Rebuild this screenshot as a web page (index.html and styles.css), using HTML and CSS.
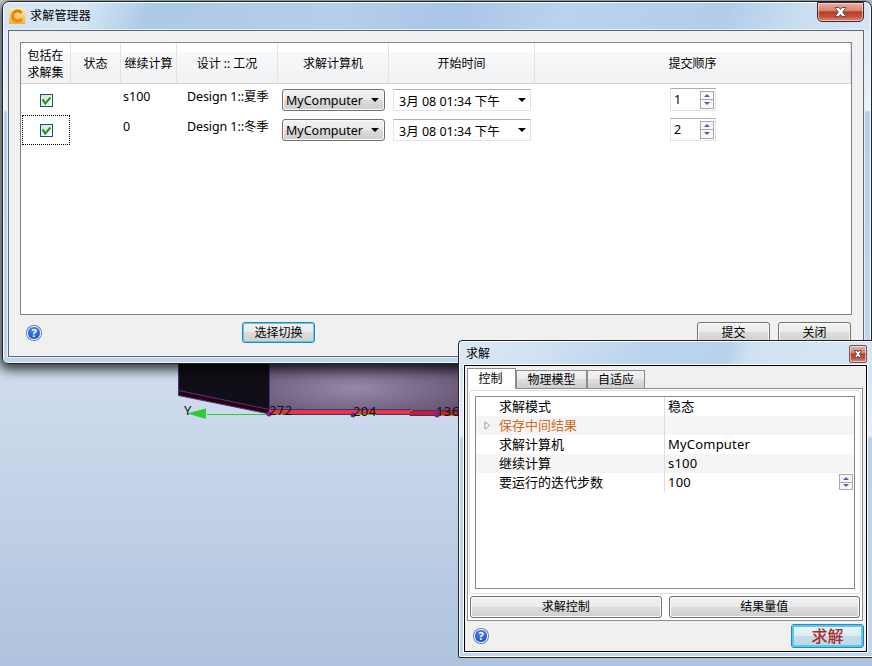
FILE: index.html
```html
<!DOCTYPE html>
<html lang="zh">
<head>
    <meta charset="UTF-8">
    <title>求解管理器</title>
    <link rel="stylesheet" href="styles.css">
</head>
<body>
    <svg class="scene" width="294" height="70" viewBox="178 356 294 70">
        <defs>
            <radialGradient id="wall" cx="0.42" cy="0.6" r="0.65">
                <stop offset="0" stop-color="#9787a8"/>
                <stop offset="1" stop-color="#625270"/>
            </radialGradient>
        </defs>
        <rect x="269" y="356" width="203" height="54" fill="url(#wall)"/>
        <path d="M178.500 356H269.500V410L178.500 390.500Z" fill="#120e17" stroke="#45358c"/>
        <path d="M178.500 390.500L269.500 409.500V414L178.500 395.500Z" fill="#310006" stroke="#45358c"/>
        <path d="M269 409.500H411V414H269Z" fill="#e8383f"/>
        <path d="M410 411H472V415H410Z" fill="#cb1f27"/>
        <path d="M269 409.500H411L412 410.500H472M269 414.500H410V415.500H472" fill="none" stroke="#3b3088"/>
        <path d="M207 414.500H269M274 414.500H283M355 414.500H376M440 415.500H456" stroke="#2ecc33"/>
        <path d="M187 413.500L206 408.500V419Z" fill="#2ecc33"/>
        <g fill="#7c1cac">
            <circle cx="269" cy="414" r="2.500"/>
            <circle cx="353" cy="415" r="2.500"/>
            <circle cx="437" cy="415" r="2.500"/>
        </g>
        <g class="axis-text">
            <text x="184" y="415">Y</text>
            <text x="269" y="415">272</text>
            <text x="353" y="416">204</text>
            <text x="436" y="416">136</text>
        </g>
    </svg>

    <div class="window manager">
        <div class="titlebar">
            <svg class="app-icon" width="16" height="16" viewBox="0 0 16 16">
                <defs>
                    <linearGradient id="gold" x2="0" y2="1">
                        <stop offset="0" stop-color="#ffe9b0"/>
                        <stop offset="1" stop-color="#f2ad35"/>
                    </linearGradient>
                </defs>
                <rect width="16" height="16" fill="url(#gold)"/>
                <path d="M12.500 5A5 5 0 1 0 12.500 11" fill="none" stroke="#e58a0c" stroke-width="3"/>
                <path d="M12 3.500A6 6 0 0 0 3.500 5" fill="none" stroke="#b97614"/>
            </svg>
            <span class="title">求解管理器</span>
            <button class="close"><svg width="13" height="10" viewBox="0 0 13 10"><path d="M1 .5H5L6.500 2.500L8 .5H12L8.700 5L12 9.500H8L6.500 7.500L5 9.500H1L4.300 5Z" fill="#fff" stroke="#535666"/></svg></button>
        </div>
        <div class="client">
            <div class="list">
                <div class="row head">
                    <div>包括在<br>求解集</div>
                    <div>状态</div>
                    <div>继续计算</div>
                    <div>设计 :: 工况</div>
                    <div>求解计算机</div>
                    <div>开始时间</div>
                    <div>提交顺序</div>
                </div>
                <div class="row item">
                    <div class="check-cell"><span class="check"><svg width="9" height="9" viewBox="0 0 9 9"><path d="M.5 3.500L3.300 7.500L8.500 1.500" fill="none" stroke="#1f9c22" stroke-width="2.200"/></svg></span></div>
                    <div></div>
                    <div class="label">s100</div>
                    <div class="label design">Design 1::夏季</div>
                    <div class="field"><span class="select">MyComputer<i class="arrow"></i></span></div>
                    <div class="field"><span class="date">3月 08 01:34 下午<i class="arrow"></i></span></div>
                    <div class="field order"><span class="spin">1<span class="steps"><i class="up"></i><i class="down"></i></span></span></div>
                </div>
                <div class="row item">
                    <div class="check-cell focus"><span class="check"><svg width="9" height="9" viewBox="0 0 9 9"><path d="M.5 3.500L3.300 7.500L8.500 1.500" fill="none" stroke="#1f9c22" stroke-width="2.200"/></svg></span></div>
                    <div></div>
                    <div class="label">0</div>
                    <div class="label design">Design 1::冬季</div>
                    <div class="field"><span class="select">MyComputer<i class="arrow"></i></span></div>
                    <div class="field"><span class="date">3月 08 01:34 下午<i class="arrow"></i></span></div>
                    <div class="field order"><span class="spin">2<span class="steps"><i class="up"></i><i class="down"></i></span></span></div>
                </div>
            </div>
            <div class="footer">
                <span class="help">?</span>
                <button class="btn active toggle">选择切换</button>
                <button class="btn submit">提交</button>
                <button class="btn">关闭</button>
            </div>
        </div>
    </div>

    <div class="window solve">
        <div class="titlebar">
            <span class="title">求解</span>
            <button class="close small"><svg width="8" height="8" viewBox="0 0 8 8"><path d="M.5 .5H3L4 2L5 .5H7.500L5.500 4L7.500 7.500H5L4 6L3 7.500H.5L2.500 4Z" fill="#fff" stroke="#535666"/></svg></button>
        </div>
        <div class="client">
            <div class="tabs">
                <span class="tab current">控制</span>
                <span class="tab physics">物理模型</span>
                <span class="tab">自适应</span>
            </div>
            <div class="page">
                <div class="inset">
                    <div class="props">
                        <div class="prop"><span class="name">求解模式</span><span class="value">稳态</span></div>
                        <div class="prop group"><svg class="expander" width="7" height="9" viewBox="0 0 7 9"><path d="M1 .8L5.500 4.500L1 8.200Z" fill="#fff" stroke="#999"/></svg><span class="name">保存中间结果</span><span class="value"></span></div>
                        <div class="prop"><span class="name">求解计算机</span><span class="value">MyComputer</span></div>
                        <div class="prop"><span class="name">继续计算</span><span class="value">s100</span></div>
                        <div class="prop"><span class="name">要运行的迭代步数</span><span class="value">100<span class="steps"><i class="up"></i><i class="down"></i></span></span></div>
                    </div>
                </div>
                <div class="actions">
                    <button class="btn">求解控制</button>
                    <button class="btn">结果量值</button>
                </div>
            </div>
            <div class="footer">
                <span class="help">?</span>
                <button class="btn active run">求解</button>
            </div>
        </div>
    </div>
</body>
</html>
```
FILE: styles.css
```css
* {
    margin: 0;
    padding: 0;
    box-sizing: border-box;
}

body {
    position: relative;
    width: 872px;
    height: 666px;
    overflow: hidden;
    font-family: 'Noto Sans', 'Noto Sans CJK SC', sans-serif;
    font-size: 12px;
    color: #000;
    background: linear-gradient(#dfe8f4 0, #d1ddee 370px, #afc3de 666px);
}

button {
    font-family: inherit;
    font-size: 12px;
    color: #000;
}

.scene {
    position: absolute;
    left: 178px;
    top: 356px;
}

.axis-text {
    font-size: 13px;
    letter-spacing: 0.4px;
    fill: #111;
}

.window {
    position: absolute;
    display: flex;
    flex-direction: column;
    border: 1px solid #20252b;
}

.titlebar {
    display: flex;
    flex: none;
}

.client {
    flex: 1;
    min-height: 0;
    background: #f0f0f0;
}

/* 求解管理器 */
.manager {
    left: 2px;
    top: 1px;
    width: 870px;
    height: 363px;
    padding: 0 7px 6px 5px;
    border-radius: 7px 7px 6px 6px;
    background: linear-gradient(#d8e6f5 0, #eaf2fa 108px, #b5d0ec 110px, #c1d6ed 100%);
    box-shadow: inset 0 0 0 1px #f4fbff, 0 3px 12px 3px rgba(0,0,0,0.75);
}

.manager .titlebar {
    height: 27px;
    margin: 1px -6px 0 -4px;
    padding-left: 5px;
    border-radius: 6px 6px 0 0;
    background: linear-gradient(110deg, #d4e3f2 0, #d8e8f5 9%, #abcae6 17%, #b3cfeb 39%, #a8c6e5 52%, #b8d3ee 64%, #b1cee9 83%, #cbdff1 92%, #d6e5f4 100%);
}

.app-icon {
    margin-top: 5px;
}

.title {
    line-height: 26px;
}

.manager .title {
    margin-left: 5px;
    letter-spacing: 0.2px;
}

.close {
    display: flex;
    align-items: center;
    justify-content: center;
    width: 47px;
    height: 20px;
    margin: -1px 6px 0 auto;
    border: 1px solid #43262a;
    border-radius: 0 0 5px 5px;
    background: linear-gradient(#e9b0a2 0, #d97e6b 45%, #b93b25 48%, #c5503b 75%, #df8b77 100%);
    box-shadow: inset 0 0 0 1px rgba(255,255,255,0.5);
}

.manager .client {
    padding: 11px;
    border: 1px solid #5d6778;
    box-shadow: 0 0 0 1px #e4eff9;
}

.list {
    height: 273px;
    border: 1px solid #82838e;
    background: #fff;
}

.row {
    display: grid;
    grid-template-columns: 50px 50px 56px 101px 111px 146px 1fr;
}

.head {
    height: 41px;
    border-bottom: 1px solid #d5d5d5;
    background: linear-gradient(#fff 9px, #f7f8fa 9px, #f1f2f4 100%);
}

.head > div {
    display: flex;
    align-items: center;
    justify-content: center;
    padding-top: 1px;
    line-height: 17px;
    text-align: center;
    border-right: 1px solid #e0e2e4;
}

.item {
    height: 30px;
    font-size: 12.5px;
}

.check-cell {
    display: flex;
    justify-content: center;
    width: 48px;
    height: 30px;
    margin: 1px 0 0 1px;
    padding-top: 9px;
}

.check-cell.focus {
    border: 1px dotted #000;
    padding-top: 8px;
}

.check {
    display: flex;
    align-items: center;
    justify-content: center;
    width: 13px;
    height: 13px;
    border: 1px solid #1c5180;
    background: linear-gradient(135deg, #dcdcd7, #fff);
}

.label {
    padding-left: 2px;
    line-height: 25px;
    white-space: nowrap;
}

.design {
    padding-left: 10px;
    letter-spacing: -0.1px;
}

.field {
    padding: 5px 4px 0 4px;
}

.select,
.date {
    display: flex;
    align-items: center;
    height: 22px;
    padding: 0 5px 0 3px;
    white-space: nowrap;
}

.select {
    width: 103px;
    border: 1px solid #707070;
    border-radius: 3px;
    background: linear-gradient(#f2f2f2, #e9e9e9 49%, #dbdbdb 51%, #cfcfcf);
    box-shadow: inset 0 0 0 1px #fafafa;
}

.date {
    width: 138px;
    padding-left: 5px;
    padding-right: 4px;
    border: 1px solid #e2e3ea;
    border-top-color: #abadb3;
    border-radius: 1px;
}

.arrow {
    margin-left: auto;
    border: 4px solid transparent;
    border-top-color: #000;
    border-bottom: 0;
}

.order {
    display: flex;
    justify-content: center;
    padding-top: 4px;
}

.spin {
    display: flex;
    align-items: center;
    justify-content: space-between;
    width: 46px;
    height: 23px;
    padding: 0 1px 0 3px;
    border: 1px solid #e2e3ea;
    border-top-color: #abadb3;
}

.steps {
    display: flex;
    flex-direction: column;
    width: 14px;
    height: 18px;
    border: 1px solid #a9a9a9;
    background: linear-gradient(#f7f7f7 7px, #a9a9a9 7px, #a9a9a9 8px, #f7f7f7 8px);
}

.up,
.down {
    flex: none;
    width: 0;
    margin: 2px auto 0;
    border: 3px solid transparent;
}

.up {
    border-top: 0;
    border-bottom-color: #4a62ad;
}

.down {
    margin-top: 5px;
    border-bottom: 0;
    border-top-color: #4a62ad;
}

.footer {
    display: flex;
}

.manager .footer {
    padding: 7px 1px 0 7px;
}

.help {
    width: 14px;
    height: 14px;
    border: 1px solid #e8f1ff;
    border-radius: 50%;
    background: radial-gradient(circle at 50% 30%, #4d8cf0, #123fc0);
    box-shadow: 0 0 0 1px #5c7dad;
    color: #fff;
    font-size: 11px;
    font-weight: bold;
    line-height: 12px;
    text-align: center;
}

.manager .help {
    margin-top: 4px;
}

.btn {
    width: 73px;
    height: 22px;
    border: 1px solid #707070;
    border-radius: 3px;
    background: linear-gradient(#f2f2f2, #ebebeb 48%, #dddddd 50%, #cfcfcf);
    box-shadow: inset 0 0 0 1px #fbfbfb;
    line-height: 18px;
}

.btn.active {
    border-color: #3c7fb1;
    box-shadow: inset 0 0 0 1px #48d0f5;
}

.manager .btn {
    height: 21px;
}

.toggle {
    margin-left: 201px;
}

.submit {
    margin-left: auto;
    margin-right: 8px;
}

/* 求解 */
.solve {
    left: 458px;
    top: 340px;
    width: 420px;
    height: 318px;
    padding: 1px 10px 5px 5px;
    border-radius: 4px 0 0 2px;
    background: linear-gradient(#c9def1 0, #e5eff9 95px, #b9d1eb 97px, #bfd6ee 100%);
    box-shadow: inset 0 0 0 1px #fff;
}

.solve .titlebar {
    height: 23px;
    margin: 0 -5px 0 -4px;
    background: linear-gradient(110deg, #dbe8f5 0, #d0e1f2 20%, #bad4ed 45%, #b9d2ec 65%, #d0e2f2 70%, #d8e6f4 100%);
}

.solve .title {
    margin-left: 6px;
    line-height: 23px;
}

.close.small {
    width: 18px;
    height: 18px;
    margin: 3px 5px 0 auto;
    border-color: #66576a;
    border-radius: 2px;
}

.solve .client {
    padding: 2px 3px 0 2px;
    border: 1px solid #000;
    box-shadow: 0 0 0 1px #fff;
}

.tabs {
    display: flex;
    align-items: flex-end;
    height: 20px;
}

.tab {
    height: 18px;
    width: 58px;
    border: 1px solid #898c95;
    border-bottom: 0;
    background: linear-gradient(#f2f2f2, #ebebeb 48%, #dddddd 50%, #cfcfcf);
    line-height: 17px;
    text-align: center;
}

.physics {
    width: 71px;
}

.current {
    position: relative;
    width: 49px;
    height: 21px;
    margin-bottom: -1px;
    padding-right: 2px;
    background: #fff;
    line-height: 20px;
}

.page {
    height: 233px;
    padding: 1px;
    border: 1px solid #898c95;
    background: #fff;
}

.inset {
    height: 204px;
    padding: 5px;
    border: 1px solid #d5dfe5;
    border-radius: 3px;
}

.props {
    height: 193px;
    border: 1px solid #828790;
    font-size: 13px;
}

.prop {
    position: relative;
    display: flex;
    height: 19px;
    line-height: 19px;
}

.prop:nth-child(even) {
    background: #f5f5f5;
}

.name {
    width: 189px;
    padding-left: 23px;
    border-right: 1px solid #ddd;
}

.group .name {
    color: #d2691e;
}

.expander {
    position: absolute;
    left: 8px;
    top: 5px;
}

.value {
    display: flex;
    flex: 1;
    padding-left: 3px;
    letter-spacing: 0.2px;
}

.value .steps {
    width: 14px;
    height: 16px;
    margin: 1px 1px 0 auto;
}

.value .steps .up {
    margin-top: 2px;
}

.value .steps .down {
    margin-top: 4px;
}

.actions {
    display: flex;
    gap: 7px;
    margin-top: 2px;
    padding: 0 1px;
}

.actions .btn {
    flex: 1;
}

.solve .footer {
    justify-content: space-between;
    margin-right: -1px;
    padding: 3px 0 0 7px;
}

.solve .help {
    margin-top: 5px;
}

.run {
    height: 24px;
    background: linear-gradient(#edf5fa, #dcebf4 48%, #c5dce8 50%, #bcd8e6);
    color: #a52a2a;
    font-size: 16px;
    font-weight: 500;
    line-height: 20px;
}

.btn.run {
    box-shadow: inset 0 0 0 2px #48d0f5;
}
```
